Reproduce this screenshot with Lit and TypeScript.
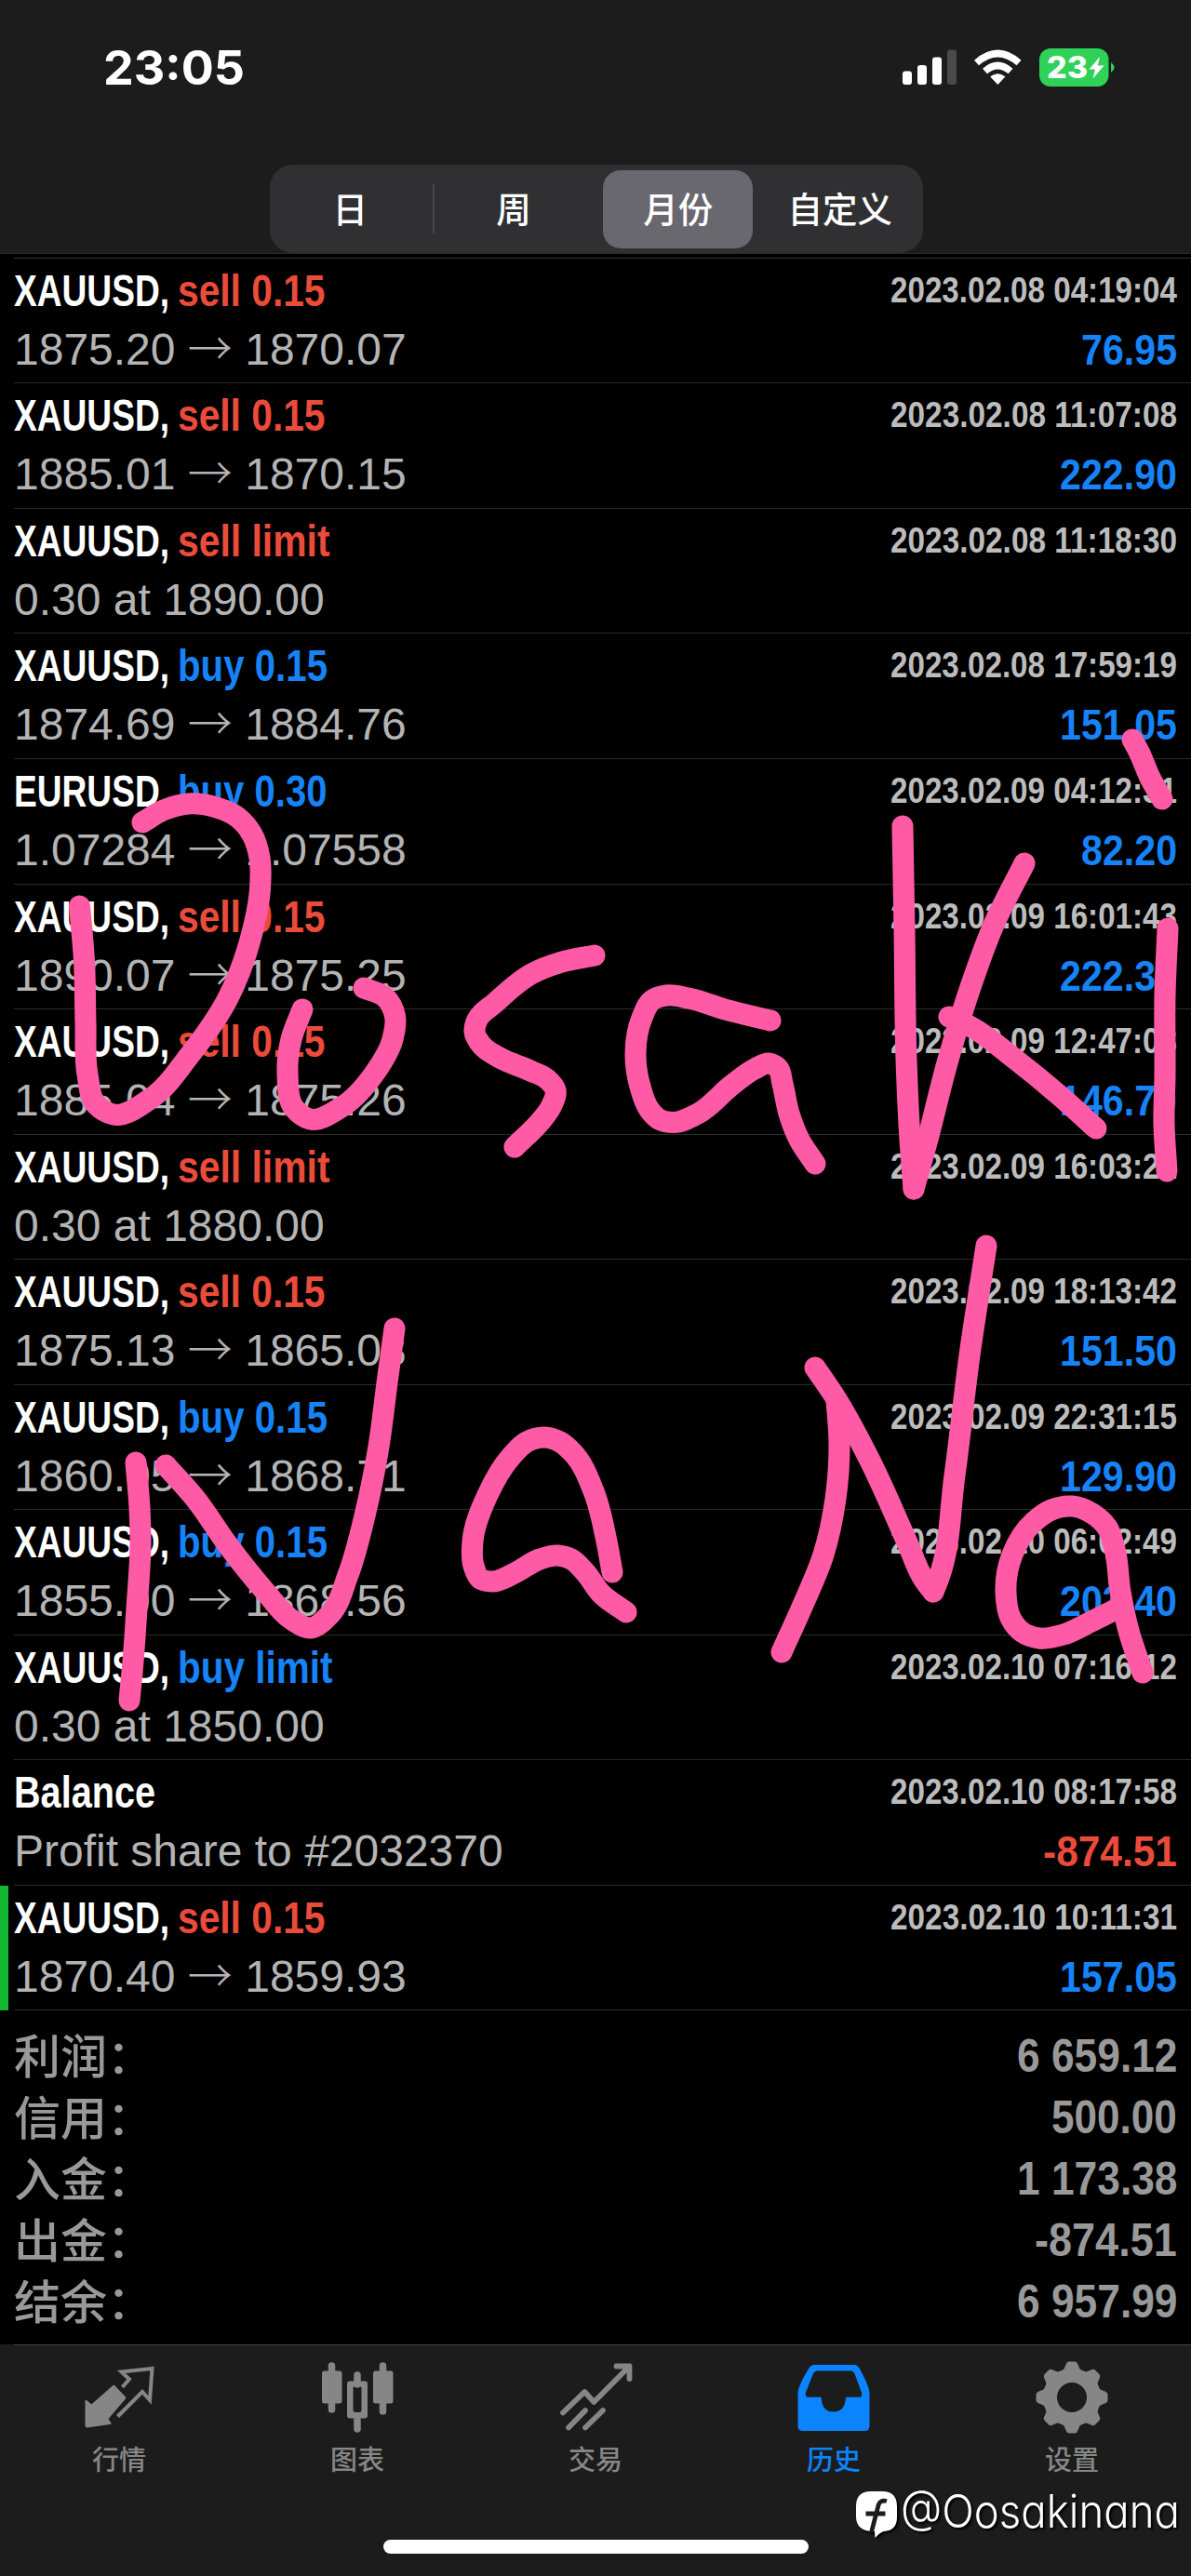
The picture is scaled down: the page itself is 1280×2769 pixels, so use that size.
import { LitElement, html, svg, css, nothing } from 'lit';
import { customElement, property } from 'lit/decorators.js';
import { classMap } from 'lit/directives/class-map.js';

type Point = [number, number];

interface Deal {
    symbol: string;
    action?: string;
    side?: 'buy' | 'sell';
    detail: string;
    time: string;
    profit?: string;
    marked?: boolean;
}

const deals: Deal[] = [
    { symbol: 'XAUUSD,', side: 'sell', action: 'sell 0.15', detail: '1875.20 → 1870.07', time: '2023.02.08 04:19:04', profit: '76.95' },
    { symbol: 'XAUUSD,', side: 'sell', action: 'sell 0.15', detail: '1885.01 → 1870.15', time: '2023.02.08 11:07:08', profit: '222.90' },
    { symbol: 'XAUUSD,', side: 'sell', action: 'sell limit', detail: '0.30 at 1890.00', time: '2023.02.08 11:18:30' },
    { symbol: 'XAUUSD,', side: 'buy', action: 'buy 0.15', detail: '1874.69 → 1884.76', time: '2023.02.08 17:59:19', profit: '151.05' },
    { symbol: 'EURUSD,', side: 'buy', action: 'buy 0.30', detail: '1.07284 → 1.07558', time: '2023.02.09 04:12:31', profit: '82.20' },
    { symbol: 'XAUUSD,', side: 'sell', action: 'sell 0.15', detail: '1890.07 → 1875.25', time: '2023.02.09 16:01:43', profit: '222.30' },
    { symbol: 'XAUUSD,', side: 'sell', action: 'sell 0.15', detail: '1885.04 → 1875.26', time: '2023.02.09 12:47:08', profit: '146.70' },
    { symbol: 'XAUUSD,', side: 'sell', action: 'sell limit', detail: '0.30 at 1880.00', time: '2023.02.09 16:03:21' },
    { symbol: 'XAUUSD,', side: 'sell', action: 'sell 0.15', detail: '1875.13 → 1865.03', time: '2023.02.09 18:13:42', profit: '151.50' },
    { symbol: 'XAUUSD,', side: 'buy', action: 'buy 0.15', detail: '1860.05 → 1868.71', time: '2023.02.09 22:31:15', profit: '129.90' },
    { symbol: 'XAUUSD,', side: 'buy', action: 'buy 0.15', detail: '1855.00 → 1868.56', time: '2023.02.10 06:02:49', profit: '203.40' },
    { symbol: 'XAUUSD,', side: 'buy', action: 'buy limit', detail: '0.30 at 1850.00', time: '2023.02.10 07:16:12' },
    { symbol: 'Balance', detail: 'Profit share to #2032370', time: '2023.02.10 08:17:58', profit: '-874.51' },
    { symbol: 'XAUUSD,', side: 'sell', action: 'sell 0.15', detail: '1870.40 → 1859.93', time: '2023.02.10 10:11:31', profit: '157.05', marked: true },
];

const totals = [
    ['利润：', '6 659.12'],
    ['信用：', '500.00'],
    ['入金：', '1 173.38'],
    ['出金：', '-874.51'],
    ['结余：', '6 957.99'],
];

// widths of the condensed bold captions
const captionWidths: Record<string, number> = {
    'XAUUSD,': 167,
    'EURUSD,': 167,
    'Balance': 152,
    'sell 0.15': 158.5,
    'sell limit': 163.5,
    'buy 0.15': 161,
    'buy 0.30': 160.5,
    'buy limit': 166.5,
};

const strokes: Point[][] = [
    // D
    [[85.5, 974], [90.5, 1033], [92, 1100], [94, 1155], [103, 1187], [122, 1198], [163, 1180], [204, 1134], [245, 1073], [269, 1010], [279.5, 955], [279, 922], [271, 897], [256, 879], [231, 867.5], [202, 864], [175.5, 871], [153, 884]],
    // o
    [[325, 1085], [313, 1117], [309, 1155], [316, 1191], [333, 1203], [367, 1190], [403, 1153], [422, 1117], [424.5, 1092], [414, 1072], [391, 1062]],
    // s
    [[639, 1027], [604, 1034], [571, 1047], [532, 1078], [513, 1096], [510, 1109], [518, 1124], [537, 1137], [570, 1151], [588, 1160], [597, 1172], [592, 1190], [582, 1204], [553, 1233]],
    // a
    [[828, 1097], [779, 1085], [740, 1073], [716, 1070], [701, 1075], [690, 1094], [683, 1133], [688, 1168], [698, 1193], [708, 1203], [724, 1206.5], [750, 1197], [787, 1166], [811, 1149], [826, 1143], [836, 1148], [841, 1165], [848, 1197], [859, 1225], [876, 1251]],
    // K
    [[970, 888], [972, 1001], [974, 1139], [978, 1225], [982, 1278]],
    [[982, 1278], [995, 1232], [1019, 1139], [1042, 1064], [1068, 994], [1101, 928]],
    [[1020, 1093], [1044, 1104], [1089, 1137], [1138, 1177], [1178, 1213]],
    // i
    [[1255, 998], [1252, 1070], [1252, 1156], [1251, 1208], [1254, 1259]],
    [[1217, 795], [1224, 808], [1236, 836], [1249, 859]],
    // N
    [[146, 1572], [150, 1621], [151, 1657], [147, 1729], [143, 1786], [139, 1828]],
    [[178, 1575], [210, 1611], [245, 1661], [286, 1712], [312, 1740], [334, 1750], [355, 1735], [374, 1693], [393, 1625], [406, 1561], [417, 1479], [424, 1428]],
    // a
    [[658, 1690], [652, 1657], [638, 1603], [616, 1562], [602, 1550], [585, 1545], [566, 1550], [549, 1566], [524, 1607], [508, 1657], [509, 1683], [516, 1697], [529, 1700], [553, 1691], [580, 1676], [600, 1672], [614, 1676], [628, 1689], [647, 1714], [673, 1733]],
    // N
    [[899, 1505], [902, 1550], [898, 1611], [885, 1671], [863, 1725], [840, 1776]],
    [[876, 1470], [899, 1504], [934, 1568], [975, 1658], [993, 1698], [1003, 1711]],
    [[1003, 1711], [1009, 1696], [1026, 1586], [1042, 1457], [1060, 1339]],
    // a
    [[1201, 1729], [1171, 1744], [1143, 1757], [1117, 1761], [1098, 1754], [1086, 1739], [1081, 1712], [1088, 1671], [1111, 1636], [1130, 1623], [1152, 1619], [1174, 1627], [1190, 1642], [1198, 1665], [1204, 1711], [1213, 1753], [1228, 1798]],
];

// smooth curve through all the points, tangents weighted by the chord lengths
function curve(points: Point[]) {
    const dist = (a: Point, b: Point) => Math.hypot(b[0] - a[0], b[1] - a[1]);
    const tangents = points.map((p, i): Point => {
        const a = points[i - 1];
        const b = points[i + 1];
        if (!a || !b) {
            const q = a ?? b;
            const sign = a ? 1 : -1;
            const d = dist(p, q);
            return [sign * (p[0] - q[0]) / d, sign * (p[1] - q[1]) / d];
        }
        const u = dist(a, p);
        const v = dist(p, b);
        return [0, 1].map(k => ((p[k] - a[k]) / u * v + (b[k] - p[k]) / v * u) / (u + v)) as Point;
    });
    let d = `M${points[0][0]} ${points[0][1]}`;
    for (let i = 0; i < points.length - 1; i++) {
        const b = points[i];
        const c = points[i + 1];
        const third = dist(b, c) / 3;
        const s = tangents[i];
        const t = tangents[i + 1];
        d += `C${b[0] + s[0] * third} ${b[1] + s[1] * third} ${c[0] - t[0] * third} ${c[1] - t[1] * third} ${c[0]} ${c[1]}`;
    }
    return d;
}

// one line of text squeezed to the given width
function fitted(text: string, width: number, height: number, baseline: number, name: string) {
    return html`
        <svg class=${name} width=${width} height=${height}>
            <text x="0" y=${baseline} textLength=${width} lengthAdjust="spacingAndGlyphs">${text}</text>
        </svg>
    `;
}

function numberWidth(text: string, digit: number) {
    return [...text].reduce((sum, ch) => {
        if (ch === '-') return sum + 18;
        if (ch === '.') return sum + digit * 0.5;
        if (ch === ' ') return sum + digit * 0.54;
        return sum + digit;
    }, 0);
}

@customElement('deal-row')
class DealRow extends LitElement {
    static styles = css`
      :host {
        display: block;
        height: 134.55px;
      }

      svg {
        display: block;
        overflow: visible;
        fill: currentColor;
      }

      .row {
        box-sizing: border-box;
        height: 100%;
        padding-left: 15px;
      }

      .row.marked {
        border-left: 9px solid #12b832;
        padding-left: 6px;
      }

      .content {
        box-sizing: border-box;
        height: 100%;
        padding-right: 15px;
        border-bottom: 1px solid #2b2b2b;
      }

      .line {
        display: flex;
        justify-content: space-between;
      }

      .title {
        display: flex;
        gap: 9px;
      }

      .caption {
        color: #fff;
        font-size: 47.5px;
        font-weight: bold;
      }

      .time {
        color: #bcbcbc;
        font-size: 38px;
        font-weight: bold;
      }

      .detail {
        color: #b4b4b4;
        font-size: 48px;
        line-height: 67px;
        white-space: pre;
      }

      .arrow {
        display: inline-block;
        width: 48px;
        font-family: "Noto Sans CJK SC", sans-serif;
        font-weight: 300;
        line-height: 1;
      }

      .profit {
        font-size: 47px;
        font-weight: bold;
      }

      .buy, .plus {
        color: #1683f7;
      }

      .sell, .minus {
        color: #eb4b3b;
      }
    `;

    @property({ attribute: false }) deal!: Deal;

    render() {
        const { symbol, side, action, time, profit, marked } = this.deal;
        return html`
            <div class=${classMap({ row: true, marked: !!marked })}>
                <div class="content">
                    <div class="line">
                        <div class="title">
                            ${fitted(symbol, captionWidths[symbol], 64, 51, 'caption')}
                            ${action ? fitted(action, captionWidths[action], 64, 51, `caption ${side}`) : nothing}
                        </div>
                        ${fitted(time, 308, 64, 47, 'time')}
                    </div>
                    <div class="line">
                        <div class="detail">${this.renderDetail()}</div>
                        ${profit
                            ? fitted(profit, numberWidth(profit, 22.9), 67, 50, profit.startsWith('-') ? 'profit minus' : 'profit plus')
                            : nothing}
                    </div>
                </div>
            </div>
        `;
    }

    renderDetail() {
        const [open, close] = this.deal.detail.split('→');
        if (!close) {
            return open;
        }
        return html`${open}<span class="arrow">→</span>${close}`;
    }
}

@customElement('tab-icon')
class TabIcon extends LitElement {
    static styles = css`
      :host {
        display: block;
      }

      svg {
        display: block;
        width: 80px;
        height: 80px;
        fill: currentColor;
        stroke: none;
      }

      .line {
        fill: none;
        stroke: currentColor;
        stroke-width: 5.8;
        stroke-linecap: round;
        stroke-linejoin: round;
      }

      .wick {
        fill: none;
        stroke: currentColor;
        stroke-width: 7.5;
        stroke-linecap: round;
      }

      .thin {
        fill: none;
        stroke: currentColor;
        stroke-width: 4;
        stroke-linejoin: miter;
      }
    `;

    @property() name = '';

    render() {
        return html`<svg viewBox="0 0 80 80">${this.renderShape()}</svg>`;
    }

    renderShape() {
        switch (this.name) {
            case 'quotes':
                return svg`
                    <path d="M33 27.500Q34.200 26 35.500 27.500L47 39.500Q47.800 40.500 47 41.500L28.500 63L31.500 67.500Q32 68.500 30.500 69L6 72.500Q3.500 72.500 3.500 70.500V43.500Q4 41.800 5.300 43.200L10.300 47.500Z" />
                    <path class="thin" d="M43.500 29L51 20.500L42.500 12.500L75.500 9L73 43L65 34L38.500 60.500" />`;
            case 'charts':
                return svg`
                    <path class="wick" d="M12.500 6V53M67.500 6V55M40 16V26M40 64V74" />
                    <rect x="2" y="11.500" width="21.500" height="35" rx="2.500" />
                    <rect x="57" y="11.500" width="21.500" height="35" rx="2.500" />
                    <path fill-rule="evenodd" d="M32 22.500h16q3 0 3 3v34q0 3-3 3h-16q-3 0-3-3v-34q0-3 3-3zM38 28q-2.500 0-2.500 2.500v23q0 2.500 2.500 2.500h4q2.500 0 2.500-2.500v-23q0-2.500-2.500-2.500z" />`;
            case 'trade':
                return svg`
                    <path class="line" d="M5 56.500L28.300 34L38.300 45L75.500 7.500M62.500 6.500H76.500V20" />
                    <path class="line" d="M11 72.500L29 54M29 72.500L48 54" />`;
            case 'history':
                return svg`
                    <path fill-rule="evenodd" d="M19 5H62Q65.500 5 67.500 8.500Q78 27 78.500 35V71Q78.500 76 73.500 76H6.500Q1.500 76 1.500 71V35Q2 27 13.500 8.500Q15.500 5 19 5ZM22 11.500Q19.500 11.500 18 14.500L9.800 35Q9.200 39.500 12.500 39.800H26Q26.800 39.800 26.800 42Q28 55.500 39.500 55.500Q51.500 55.500 52.800 42Q52.800 39.800 53.600 39.800H68Q71 39.500 70 35L62.500 14.500Q61 11.500 58.500 11.500Z" />`;
            default:
                return svg`
                    <circle cx="40" cy="40" r="23.500" fill="none" stroke="currentColor" stroke-width="15" />
                    ${[0, 45, 90, 135, 180, 225, 270, 315].map(angle => svg`
                        <path transform="rotate(${angle} 40 40)" d="M27 13L31.500 9.500L33.800 4Q34.500 1.500 37 1.500H43Q45.500 1.500 46.200 4L48.500 9.500L53 13Z" />
                    `)}`;
        }
    }
}

@customElement('app-root')
class AppRoot extends LitElement {
    static styles = css`
      :host {
        display: block;
        position: relative;
        width: 1280px;
        height: 2769px;
        overflow: hidden;
        background: #000;
        font-family: "Liberation Sans", "Noto Sans CJK SC", sans-serif;
      }

      svg {
        display: block;
        overflow: visible;
      }

      header {
        box-sizing: border-box;
        height: 273px;
        background: #1c1c1c;
        border-bottom: 1px solid #2a2a2a;
      }

      .status {
        box-sizing: border-box;
        display: flex;
        justify-content: space-between;
        height: 177px;
        padding: 50px 81px 0 111px;
      }

      .clock {
        font: 700 51px Inter, sans-serif;
        fill: #fff;
      }

      .percent {
        font: 800 32px Inter, sans-serif;
        fill: #fff;
      }

      .segments {
        box-sizing: border-box;
        display: flex;
        align-items: center;
        width: 702px;
        height: 95px;
        margin-left: 290px;
        background: #303033;
        border-radius: 25px;
      }

      .segment {
        flex: 1;
        height: 84px;
        padding-right: 3px;
        color: #fff;
        font: 500 37.5px/80px "Noto Sans CJK SC", sans-serif;
        text-align: center;
      }

      .segment.active {
        box-sizing: border-box;
        flex: 0 0 161px;
        margin: 0 7px;
        padding: 0;
        background: #69686f;
        border-radius: 19px;
      }

      .divider {
        width: 2px;
        height: 53px;
        margin: 0 -1px;
        background: #48484b;
      }

      .deals {
        padding-top: 3.8px;
      }

      .deals::before {
        content: '';
        display: block;
        height: 1px;
        margin-left: 15px;
        background: #333;
      }

      .totals {
        box-sizing: border-box;
        height: 358.5px;
        padding: 15px 15px 0;
        color: #999;
      }

      .total {
        display: flex;
        justify-content: space-between;
        height: 65.85px;
      }

      .label {
        font: 500 50px/62px "Noto Sans CJK SC", sans-serif;
      }

      .sum {
        font-size: 49.5px;
        font-weight: bold;
        fill: currentColor;
      }

      footer {
        box-sizing: border-box;
        height: 249px;
        background: #1c1c1c;
      }

      footer::before {
        content: '';
        display: block;
        height: 1px;
        margin-left: 15px;
        background: #444;
      }

      .tabs {
        display: flex;
        height: 209px;
      }

      .tab {
        flex: 1;
        display: flex;
        flex-direction: column;
        align-items: center;
        padding-top: 16px;
        color: #868686;
        font: 500 29px/40px "Noto Sans CJK SC", sans-serif;
      }

      .tab.active {
        color: #0a84ff;
      }

      .tab span {
        margin-top: 5px;
      }

      .home {
        width: 457px;
        height: 15px;
        margin-left: 412px;
        background: #fff;
        border-radius: 8px;
      }

      .drawing {
        position: absolute;
        top: 0;
        left: 0;
        fill: none;
        stroke: #ff5aa5;
        stroke-width: 23px;
        stroke-linecap: round;
        stroke-linejoin: round;
      }

      .watermark {
        position: absolute;
        top: 2670px;
        left: 920px;
        display: flex;
        gap: 4px;
        filter: drop-shadow(2px 2px 1px #000);
      }

      .handle {
        font: 350 49px Inter, sans-serif;
        font-feature-settings: "cv11";
        fill: #fff;
      }
    `;

    render() {
        return html`
            <header>
                ${this.renderStatus()}
                <div class="segments">
                    <div class="segment">日</div>
                    <div class="divider"></div>
                    <div class="segment">周</div>
                    <div class="segment active">月份</div>
                    <div class="segment">自定义</div>
                </div>
            </header>
            <div class="deals">
                ${deals.map(deal => html`<deal-row .deal=${deal}></deal-row>`)}
            </div>
            <div class="totals">
                ${totals.map(([label, sum]) => html`
                    <div class="total">
                        <div class="label">${label}</div>
                        ${fitted(sum, numberWidth(sum, 24.5), 65, 51, 'sum')}
                    </div>
                `)}
            </div>
            <footer>
                <div class="tabs">
                    ${this.renderTab('quotes', '行情')}
                    ${this.renderTab('charts', '图表')}
                    ${this.renderTab('trade', '交易')}
                    ${this.renderTab('history', '历史')}
                    ${this.renderTab('settings', '设置')}
                </div>
                <div class="home"></div>
            </footer>
            <svg class="drawing" width="1280" height="2769">
                ${strokes.map(points => svg`<path d=${curve(points)} />`)}
            </svg>
            <div class="watermark">
                <svg width="44" height="60" viewBox="0 0 44 60">
                    <path fill="#fff" d="M16 8H28Q44 8 44 24V36Q44 50 30 51Q26 52 20.500 58L20 51H15Q0 49 0 35V24Q0 8 16 8Z" />
                    <path fill="none" stroke="#1c1c1c" stroke-width="4.800" d="M33 18.500Q25 16.500 23.500 25L16.500 52M10.500 32H31.500" />
                </svg>
                ${fitted('@Oosakinana', 300, 60, 47, 'handle')}
            </div>
        `;
    }

    renderStatus() {
        return html`
            <div class="status">
                ${fitted('23:05', 152, 50, 41, 'clock')}
                <svg width="240" height="50" viewBox="0 0 240 50" fill="#fff">
                    <rect x="11" y="26.500" width="10" height="14.500" rx="3" />
                    <rect x="27" y="20" width="10" height="21" rx="3" />
                    <rect x="43" y="11.500" width="10" height="29.500" rx="3" />
                    <rect x="59" y="3.500" width="10" height="37.500" rx="3" fill="#4a4a4a" />
                    <path d="M113.300 40.500L105.800 32.500Q113.300 27 120.800 32.500Z" stroke="#fff" stroke-linejoin="round" />
                    <path d="M99.500 26.500Q113.300 14.500 127 26.500M90.500 17.500Q113.300-2.500 136 17.500" fill="none" stroke="#fff" stroke-width="7.500" />
                    <rect x="158" y="2" width="74.500" height="41" rx="12" fill="#30d158" />
                    <path d="M235 17Q242 22.500 235 28Z" fill="#30d158" />
                    <text class="percent" x="166" y="34" textLength="44" lengthAdjust="spacingAndGlyphs">23</text>
                    <path d="M223 11L211.500 24.500H218L215.500 34.500L227.500 20.500H220.800Z" />
                </svg>
            </div>
        `;
    }

    renderTab(name: string, label: string) {
        return html`
            <div class=${classMap({ tab: true, active: name === 'history' })}>
                <tab-icon name=${name}></tab-icon>
                <span>${label}</span>
            </div>
        `;
    }
}
